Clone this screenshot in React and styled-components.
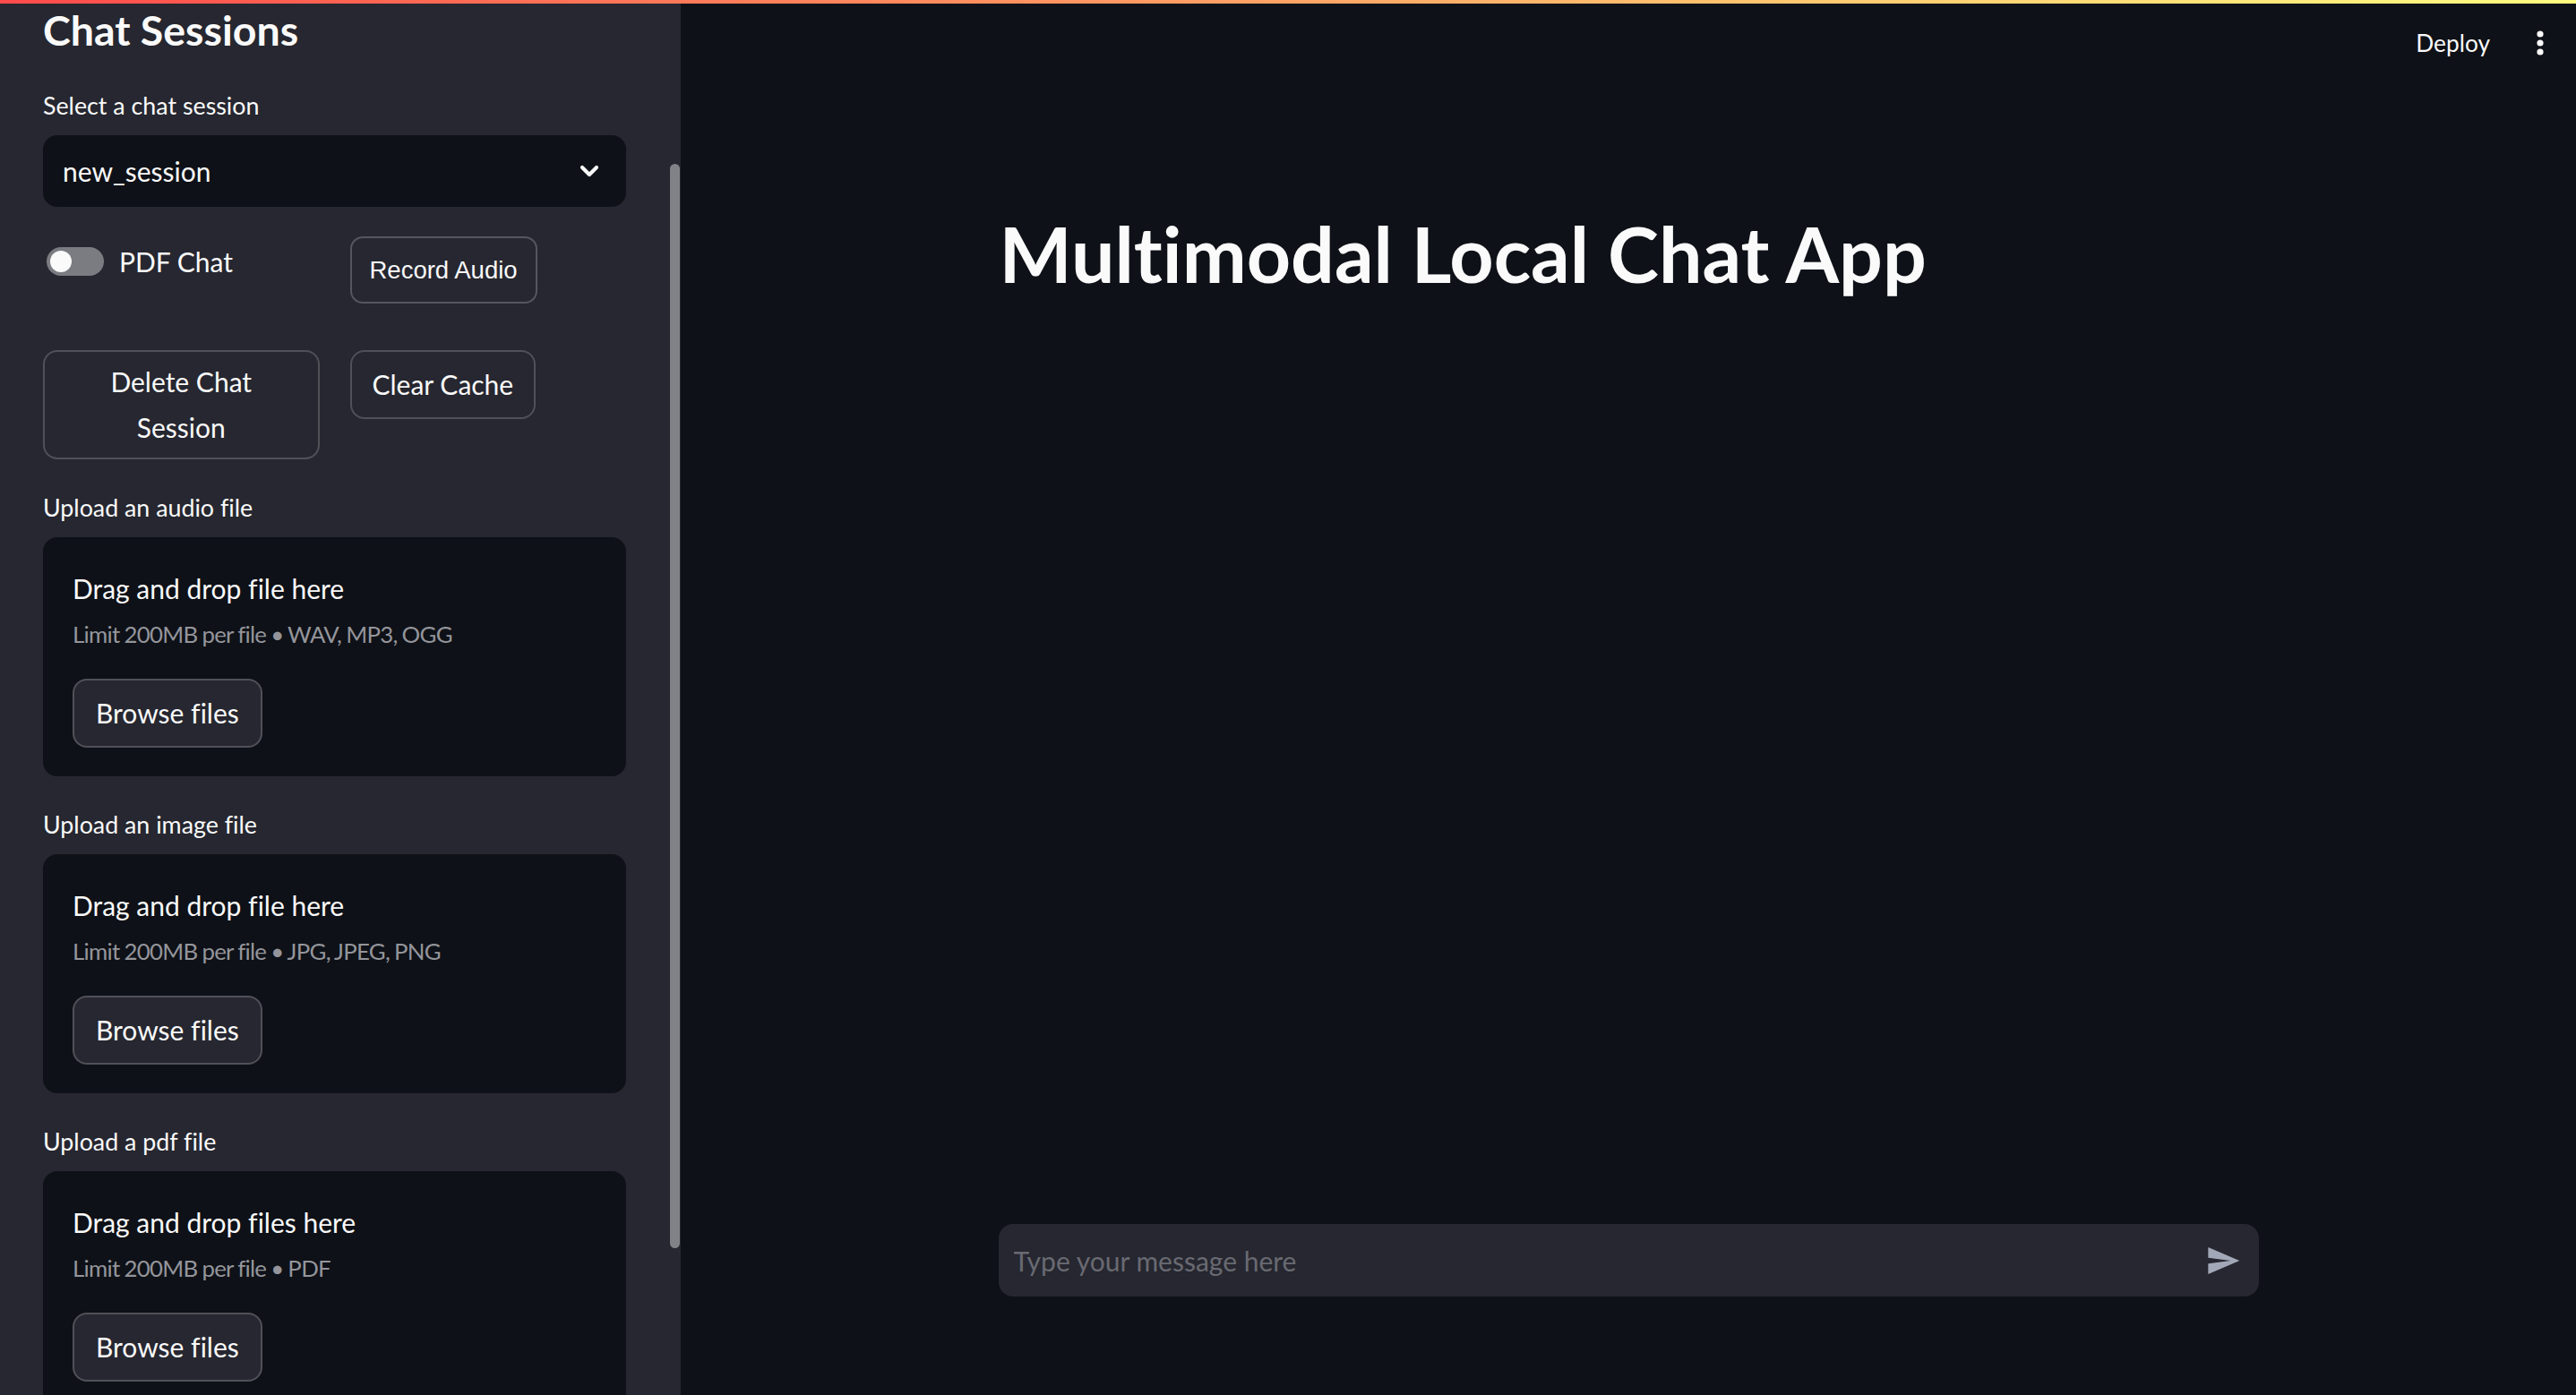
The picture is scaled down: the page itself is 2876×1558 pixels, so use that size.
import React from "react";
import styled, { createGlobalStyle } from "styled-components";

const GlobalStyle = createGlobalStyle`
  html, body {
    margin: 0;
    padding: 0;
    background: #0e1117;
  }
  body {
    font-family: Lato, "Noto Sans", sans-serif;
    font-variant-ligatures: none;
    color: #fafafa;
    overflow: hidden;
  }
  #root {
    height: 100vh;
  }
  *, *::before, *::after {
    box-sizing: border-box;
  }
  button, input {
    font-variant-ligatures: none;
  }
`;

const Shell = styled.div`
  position: relative;
  display: flex;
  height: 100vh;
  overflow: hidden;
`;

const Decoration = styled.div`
  position: absolute;
  top: 0;
  left: 0;
  right: 0;
  height: 4px;
  background: linear-gradient(90deg, #ff4b4b, #fffd80);
  z-index: 10;
`;

const Sidebar = styled.aside`
  position: relative;
  flex: 0 0 760px;
  height: 100%;
  background: #262730;
  overflow: hidden;
  padding: 4px 61px 0 48px;
  display: flex;
  flex-direction: column;
  & > * {
    flex-shrink: 0;
  }
`;

const ScrollThumb = styled.div`
  position: absolute;
  top: 183px;
  right: 1px;
  width: 11px;
  height: 1211px;
  border-radius: 6px;
  background: #818288;
`;

const SideTitle = styled.h1`
  margin: 0;
  font-size: 46.5px;
  font-weight: 700;
  line-height: 58px;
  color: #fafafa;
`;

const FieldLabel = styled.label`
  display: block;
  margin-top: ${(p) => p.$top || 32}px;
  padding-bottom: 10px;
  font-size: 26.8px;
  line-height: 45px;
  color: #fafafa;
`;

const SelectBox = styled.div`
  height: 80px;
  border-radius: 16px;
  background: #0e1117;
  display: flex;
  align-items: center;
  justify-content: space-between;
  padding: 0 30px 0 22px;
  font-size: 30px;
  color: #fafafa;
`;

const Row = styled.div`
  margin-top: 32px;
  display: grid;
  grid-template-columns: 1fr 1fr;
  column-gap: 34px;
  align-items: start;
`;

const ToggleRow = styled.div`
  margin-top: 13px;
  height: 32px;
  display: flex;
  align-items: center;
  gap: 17px;
  padding-left: 4px;
  font-size: 30px;
  color: #fafafa;
`;

const Track = styled.span`
  position: relative;
  width: 64px;
  height: 32px;
  border-radius: 16px;
  background: #7b7c82;
  flex: 0 0 auto;
`;

const Knob = styled.span`
  position: absolute;
  top: 4px;
  left: 4px;
  width: 24px;
  height: 24px;
  border-radius: 50%;
  background: #fafafa;
`;

const AudioFrame = styled.div`
  height: 96px;
  padding-top: 1px;
`;

const RecordButton = styled.button`
  height: 75px;
  padding: 0 20px;
  border: 2px solid #55565e;
  border-radius: 14px;
  background: #262730;
  color: #fafafa;
  font-family: "Liberation Sans", Arial, sans-serif;
  font-size: 27.5px;
`;

const Button = styled.button`
  min-height: 77px;
  padding: 8px 23px;
  border: 2px solid rgba(250, 250, 250, 0.2);
  border-radius: 16px;
  background: #262730;
  color: #fafafa;
  font-family: Lato, "Noto Sans", sans-serif;
  font-size: 30px;
  line-height: 51px;
  text-align: center;
  width: ${(p) => (p.$full ? "100%" : "auto")};
  justify-self: start;
`;

const Dropzone = styled.section`
  background: #0e1117;
  border-radius: 16px;
  padding: 32px 32px 32px 33px;
  display: flex;
  flex-direction: column;
  align-items: flex-start;
`;

const DropTitle = styled.div`
  font-size: 30px;
  line-height: 50px;
  color: #fafafa;
`;

const DropHint = styled.div`
  font-size: 25.8px;
  letter-spacing: -0.7px;
  word-spacing: -1px;
  line-height: 52px;
  color: #94959b;
`;

const BrowseButton = styled(Button)`
  margin-top: 24px;
  padding: 8px 24px;
`;

const Main = styled.main`
  position: relative;
  flex: 1;
  height: 100%;
  display: flex;
  flex-direction: column;
  background: #0e1117;
`;

const Header = styled.header`
  height: 96px;
  flex-shrink: 0;
  display: flex;
  align-items: center;
  justify-content: flex-end;
  padding-right: 20px;
  gap: 20px;
`;

const DeployButton = styled.button`
  background: transparent;
  border: none;
  padding: 0 16px;
  font-family: Lato, "Noto Sans", sans-serif;
  font-size: 26.3px;
  color: #fafafa;
`;

const IconButton = styled.button`
  width: 40px;
  height: 40px;
  display: flex;
  align-items: center;
  justify-content: center;
  background: transparent;
  border: none;
  padding: 0;
  color: #fafafa;
`;

const Content = styled.div`
  flex: 1;
  width: 1407px;
  margin: 0 auto;
`;

const PageTitle = styled.h1`
  margin: 137px 0 0;
  padding-left: 1px;
  font-size: 86px;
  font-weight: 700;
  line-height: 100px;
  color: #fafafa;
`;

const BottomBar = styled.div`
  flex-shrink: 0;
  width: 1407px;
  margin: 0 auto 110px;
`;

const ChatInput = styled.div`
  height: 81px;
  border-radius: 16px;
  background: #262730;
  display: flex;
  align-items: center;
  padding: 0 20px 0 17px;
`;

const MessageField = styled.input`
  flex: 1;
  background: transparent;
  border: none;
  outline: none;
  font-family: Lato, "Noto Sans", sans-serif;
  font-size: 30px;
  color: #fafafa;
  padding: 0;
  &::placeholder {
    color: #696a72;
  }
`;

const SendButton = styled.button`
  width: 40px;
  height: 40px;
  padding: 0;
  border: none;
  background: transparent;
  display: flex;
  align-items: center;
  justify-content: center;
`;

const Chevron = () => (
  <svg width="22" height="14" viewBox="0 0 22 14" fill="none">
    <path d="M3 3 L11 11 L19 3" stroke="#fafafa" strokeWidth="4.2" strokeLinecap="round" strokeLinejoin="round" />
  </svg>
);

const Kebab = () => (
  <svg width="10" height="30" viewBox="0 0 10 30">
    <circle cx="5" cy="5" r="3.6" fill="#fafafa" />
    <circle cx="5" cy="15" r="3.6" fill="#fafafa" />
    <circle cx="5" cy="25" r="3.6" fill="#fafafa" />
  </svg>
);

const SendIcon = () => (
  <svg width="40" height="40" viewBox="0 0 24 24">
    <path d="M2.01 21L23 12 2.01 3 2 10l15 2-15 2z" fill="#a3a8b8" />
  </svg>
);

const uploaders = [
  { label: "Upload an audio file", title: "Drag and drop file here", hint: "Limit 200MB per file • WAV, MP3, OGG" },
  { label: "Upload an image file", title: "Drag and drop file here", hint: "Limit 200MB per file • JPG, JPEG, PNG" },
  { label: "Upload a pdf file", title: "Drag and drop files here", hint: "Limit 200MB per file • PDF" },
];

export default function App() {
  return (
    <>
      <GlobalStyle />
      <Shell>
        <Decoration />
        <Sidebar>
          <SideTitle>Chat Sessions</SideTitle>
          <FieldLabel $top={34}>Select a chat session</FieldLabel>
          <SelectBox>
            <span>new_session</span>
            <Chevron />
          </SelectBox>
          <Row>
            <ToggleRow>
              <Track>
                <Knob />
              </Track>
              <span>PDF Chat</span>
            </ToggleRow>
            <AudioFrame>
              <RecordButton>Record Audio</RecordButton>
            </AudioFrame>
          </Row>
          <Row>
            <Button $full>Delete Chat Session</Button>
            <Button>Clear Cache</Button>
          </Row>
          {uploaders.map((u) => (
            <React.Fragment key={u.label}>
              <FieldLabel>{u.label}</FieldLabel>
              <Dropzone>
                <DropTitle>{u.title}</DropTitle>
                <DropHint>{u.hint}</DropHint>
                <BrowseButton>Browse files</BrowseButton>
              </Dropzone>
            </React.Fragment>
          ))}
          <ScrollThumb />
        </Sidebar>
        <Main>
          <Header>
            <DeployButton>Deploy</DeployButton>
            <IconButton>
              <Kebab />
            </IconButton>
          </Header>
          <Content>
            <PageTitle>Multimodal Local Chat App</PageTitle>
          </Content>
          <BottomBar>
            <ChatInput>
              <MessageField placeholder="Type your message here" />
              <SendButton>
                <SendIcon />
              </SendButton>
            </ChatInput>
          </BottomBar>
        </Main>
      </Shell>
    </>
  );
}
